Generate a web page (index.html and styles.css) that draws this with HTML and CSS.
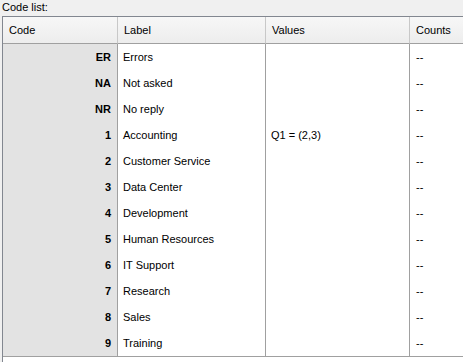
FILE: index.html
```html
<!DOCTYPE html>
<html>
<head>
<meta charset="utf-8">
<link rel="stylesheet" href="styles.css">
</head>
<body>
<div class="title">Code list:</div>
<div class="panel">
  <div class="grid">
    <div class="hd">Code</div><div class="hd">Label</div><div class="hd">Values</div><div class="hd last">Counts</div>
    <div class="code">ER</div><div class="lab">Errors</div><div class="val"></div><div class="cnt">--</div>
    <div class="code">NA</div><div class="lab">Not asked</div><div class="val"></div><div class="cnt">--</div>
    <div class="code">NR</div><div class="lab">No reply</div><div class="val"></div><div class="cnt">--</div>
    <div class="code">1</div><div class="lab">Accounting</div><div class="val">Q1 = (2,3)</div><div class="cnt">--</div>
    <div class="code">2</div><div class="lab">Customer Service</div><div class="val"></div><div class="cnt">--</div>
    <div class="code">3</div><div class="lab">Data Center</div><div class="val"></div><div class="cnt">--</div>
    <div class="code">4</div><div class="lab">Development</div><div class="val"></div><div class="cnt">--</div>
    <div class="code">5</div><div class="lab">Human Resources</div><div class="val"></div><div class="cnt">--</div>
    <div class="code">6</div><div class="lab">IT Support</div><div class="val"></div><div class="cnt">--</div>
    <div class="code">7</div><div class="lab">Research</div><div class="val"></div><div class="cnt">--</div>
    <div class="code">8</div><div class="lab">Sales</div><div class="val"></div><div class="cnt">--</div>
    <div class="code">9</div><div class="lab">Training</div><div class="val"></div><div class="cnt">--</div>
  </div>
</div>
</body>
</html>
```
FILE: styles.css
```css
html, body {
  margin: 0;
  height: 100%;
}
body {
  background: #f0f0f0;
  font-family: "Liberation Sans", Arial, sans-serif;
  font-size: 11px;
  color: #000;
  display: flex;
  flex-direction: column;
  overflow: hidden;
}
.title {
  height: 16px;
  line-height: 15px;
  padding-left: 2px;
  flex: none;
}
.panel {
  flex: 1;
  margin-left: 2px;
  border-left: 1px solid #828790;
  border-top: 1px solid #828790;
  background: #fff;
}
.grid {
  display: grid;
  grid-template-columns: 115px 148px 144px 1fr;
  grid-template-rows: 27px;
  grid-auto-rows: 26px;
  border-bottom: 1px solid #a0a0a0;
}
.grid > div {
  line-height: 26px;
  white-space: nowrap;
  box-sizing: border-box;
  border-right: 1px solid #a0a0a0;
}
.hd {
  background: linear-gradient(#f7f7f7, #ededed);
  border-bottom: 1px solid #a0a0a0;
  border-right-color: #c8c8c8 !important;
  padding-left: 6px;
  line-height: 26px !important;
}
.grid > .last, .grid > .cnt {
  border-right: none;
}
.code {
  background: #e3e3e3;
  font-weight: bold;
  text-align: right;
  padding-right: 6px;
}
.lab {
  padding-left: 5px;
}
.val {
  padding-left: 5px;
}
.cnt {
  padding-left: 6px;
}
```
